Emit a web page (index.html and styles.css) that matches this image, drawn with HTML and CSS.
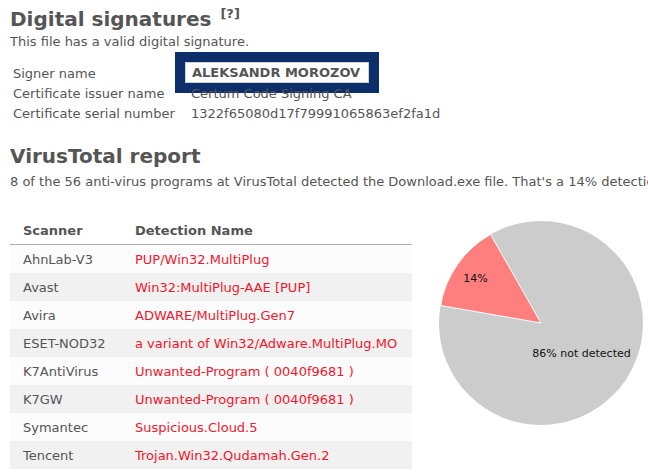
FILE: index.html
```html
<!doctype html>
<html lang="en">
    <head>
        <meta charset="UTF-8" />
        <meta name="viewport" content="width=device-width, initial-scale=1.0" />
        <title>Download.exe - Digital signatures and VirusTotal report</title>
        <link rel="stylesheet" href="styles.css">
    </head>
    <body>
        <section class="signatures">
            <h1>Digital signatures <sup class="help">[?]</sup></h1>
            <p>This file has a valid digital signature.</p>
            <div class="sig-table">
                <div class="sig-label">Signer name</div>
                <div class="sig-value">
                    <span class="callout"><span class="callout-inner">ALEKSANDR MOROZOV</span></span>
                </div>
                <div class="sig-label">Certificate issuer name</div>
                <div class="sig-value">Certum Code Signing CA</div>
                <div class="sig-label">Certificate serial number</div>
                <div class="sig-value">1322f65080d17f79991065863ef2fa1d</div>
            </div>
        </section>

        <section class="report">
            <h2>VirusTotal report</h2>
            <p>8 of the 56 anti-virus programs at VirusTotal detected the Download.exe file. That's a 14% detection rate.</p>
            <div class="report-body">
                <table class="scans">
                    <thead>
                        <tr><th class="col-scanner">Scanner</th><th>Detection Name</th></tr>
                    </thead>
                    <tbody>
                        <tr><td>AhnLab-V3</td><td class="hit">PUP/Win32.MultiPlug</td></tr>
                        <tr><td>Avast</td><td class="hit">Win32:MultiPlug-AAE [PUP]</td></tr>
                        <tr><td>Avira</td><td class="hit">ADWARE/MultiPlug.Gen7</td></tr>
                        <tr><td>ESET-NOD32</td><td class="hit">a variant of Win32/Adware.MultiPlug.MO</td></tr>
                        <tr><td>K7AntiVirus</td><td class="hit">Unwanted-Program ( 0040f9681 )</td></tr>
                        <tr><td>K7GW</td><td class="hit">Unwanted-Program ( 0040f9681 )</td></tr>
                        <tr><td>Symantec</td><td class="hit">Suspicious.Cloud.5</td></tr>
                        <tr><td>Tencent</td><td class="hit">Trojan.Win32.Qudamah.Gen.2</td></tr>
                    </tbody>
                </table>
                <svg class="pie" width="210" height="210" viewBox="0 0 210 210">
                    <circle cx="105" cy="105" r="102" fill="#cccccc" />
                    <path d="M105,105 L4.5,87.5 A102,102 0 0 1 54.5,16.4 Z" fill="#ff7f7f" stroke="#ffffff" stroke-width="1" />
                    <text x="39.5" y="63.5" text-anchor="middle">14%</text>
                    <text x="145.5" y="138.5" text-anchor="middle">86% not detected</text>
                </svg>
            </div>
        </section>
    </body>
</html>
```

FILE: styles.css
```css
body {
    font-family: "DejaVu Sans", Verdana, sans-serif;
    font-size: 13px;
    color: #555555;
    margin: 0;
    padding: 4px 0 0 10px;
    background: #ffffff;
    overflow: hidden;
}
h1,
h2 {
    margin: 0;
    font-size: 20px;
    font-weight: bold;
    color: #555555;
}
h1 {
    line-height: 30px;
}
h2 {
    line-height: 26px;
}
.help {
    font-size: 13px;
    vertical-align: 8px;
    line-height: 0;
    margin-left: 2px;
}
p {
    margin: 0;
    line-height: 16px;
    white-space: nowrap;
}
.sig-table {
    position: relative;
    display: grid;
    grid-template-columns: 178px auto;
    grid-auto-rows: 20px;
    align-items: center;
    margin: 13px 0 20px 3px;
}
.sig-value {
    position: relative;
}
.callout {
    position: absolute;
    left: -16px;
    top: -21px;
    border: 10px solid #0c2f6b;
    background: #ffffff;
}
.callout-inner {
    display: block;
    width: 176px;
    height: 19px;
    line-height: 19px;
    padding-left: 6px;
    border: 1px solid #d0d0d0;
    font-weight: bold;
    white-space: nowrap;
}
.report {
    overflow: hidden;
}
.report p {
    margin-top: 5px;
}
.report-body {
    display: flex;
    align-items: flex-start;
    margin-top: 26px;
}
.scans {
    width: 402px;
    border-collapse: collapse;
    flex: none;
}
.scans th {
    text-align: left;
    font-weight: bold;
    height: 28px;
    padding: 0 0 0 13px;
    border-bottom: 1px solid #b0b0b0;
}
.scans .col-scanner {
    width: 99px;
}
.scans td {
    height: 28px;
    padding: 0 0 0 13px;
    white-space: nowrap;
}
.scans tbody tr:nth-child(odd) {
    background: #fcfcfc;
}
.scans tbody tr:nth-child(even) {
    background: #f1f1f1;
}
.scans .hit {
    color: #f5142a;
}
.pie {
    flex: none;
    margin: 2px 0 0 24px;
}
.pie text {
    font-family: "DejaVu Sans", Verdana, sans-serif;
    font-size: 11px;
    fill: #111111;
}
```
